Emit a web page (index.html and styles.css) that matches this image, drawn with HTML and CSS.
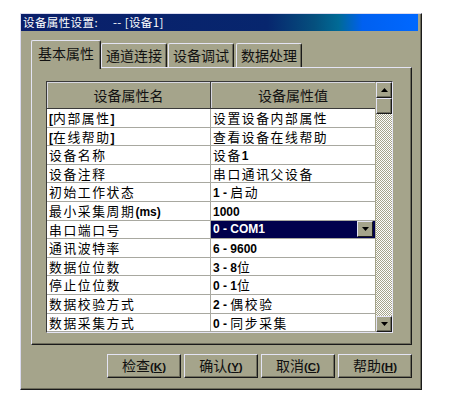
FILE: index.html
```html
<!DOCTYPE html>
<html>
<head>
<meta charset="utf-8">
<link rel="stylesheet" href="styles.css">
</head>
<body>
<div class="win">
  <div class="titlebar"><span class="ttext">设备属性设置:     -- [设备1]</span></div>
  <div class="body">
    <div class="tabs">
      <div class="tab sel">基本属性</div>
      <div class="tab t2">通道连接</div>
      <div class="tab t3">设备调试</div>
      <div class="tab t4">数据处理</div>
    </div>
    <div class="panel">
      <div class="grid">
        <div class="table">
          <div class="hd">设备属性名</div>
          <div class="hd hd2">设备属性值</div>

          <div class="c k"><span class="b">[</span>内部属性<span class="b">]</span></div>
          <div class="c v">设置设备内部属性</div>

          <div class="c k"><span class="b">[</span>在线帮助<span class="b">]</span></div>
          <div class="c v">查看设备在线帮助</div>

          <div class="c k">设备名称</div>
          <div class="c v">设备<span class="b">1</span></div>

          <div class="c k">设备注释</div>
          <div class="c v">串口通讯父设备</div>

          <div class="c k">初始工作状态</div>
          <div class="c v"><span class="b">1 - </span>启动</div>

          <div class="c k">最小采集周期<span class="b">(ms)</span></div>
          <div class="c v"><span class="b">1000</span></div>

          <div class="c k">串口端口号</div>
          <div class="c v selv"><span class="b">0 - COM1</span>
            <span class="drop"><svg width="7" height="4" viewBox="0 0 7 4"><path d="M0 0h7L3.5 4z" fill="#000"/></svg></span>
          </div>

          <div class="c k">通讯波特率</div>
          <div class="c v"><span class="b">6 - 9600</span></div>

          <div class="c k">数据位位数</div>
          <div class="c v"><span class="b">3 - 8</span>位</div>

          <div class="c k">停止位位数</div>
          <div class="c v"><span class="b">0 - 1</span>位</div>

          <div class="c k">数据校验方式</div>
          <div class="c v"><span class="b">2 - </span>偶校验</div>

          <div class="c k">数据采集方式</div>
          <div class="c v"><span class="b">0 - </span>同步采集</div>
        </div>
        <div class="sb">
          <div class="sbtn"><svg width="7" height="4" viewBox="0 0 7 4"><path d="M3.5 0L7 4H0z" fill="#000"/></svg></div>
          <div class="thumb"></div>
          <div class="track"></div>
          <div class="sbtn"><svg width="7" height="4" viewBox="0 0 7 4"><path d="M0 0h7L3.5 4z" fill="#000"/></svg></div>
        </div>
      </div>
    </div>
    <div class="buttons">
      <div class="btn">检查<span class="b">(<u>K</u>)</span></div>
      <div class="btn">确认<span class="b">(<u>Y</u>)</span></div>
      <div class="btn">取消<span class="b">(<u>C</u>)</span></div>
      <div class="btn">帮助<span class="b">(<u>H</u>)</span></div>
    </div>
  </div>
</div>
</body>
</html>
```

FILE: styles.css
```css
* { box-sizing: border-box; }
html, body { margin: 0; padding: 0; background: #fff; }
body {
  font-family: "Noto Sans CJK SC", "DejaVu Sans", sans-serif;
  color: #000;
}
.win {
  margin: 13px 0 0 20px;
  width: 402px;
  height: 377px;
  background: #a5a48b;
  border: 1px solid;
  border-color: #dcdcf0 #1a1a1a #1a1a1a #dcdcf0;
  box-shadow: inset -1px -1px 0 #6e6d5c;
}
.titlebar {
  height: 17px;
  margin-right: 3px;
  background: linear-gradient(90deg, #0a1f6a 0%, #07266e 62%, #05507e 74%, #006a96 80%, #0060f0 86%, #0068ff 100%);
  display: flex;
  align-items: center;
  padding-left: 2px;
}
.ttext {
  color: #fff;
  font-size: 11.5px;
  letter-spacing: 0.4px;
  line-height: 17px;
  white-space: pre;
}
.body {
  padding: 9px 10px 0 10px;
}
.tabs {
  display: flex;
  height: 27px;
  align-items: flex-start;
  position: relative;
  z-index: 2;
}
.tab {
  height: 24px;
  margin-top: 3px;
  font-size: 14px;
  line-height: 22px;
  color: #111;
  text-align: center;
  background: #a5a48b;
  border-top: 1px solid #e4e4f4;
  border-left: 1px solid #e4e4f4;
  border-right: 1px solid #1a1a1a;
  border-radius: 2px 2px 0 0;
  box-shadow: inset -1px 0 0 #6e6d5c;
}
.tab.sel {
  width: 70px;
  height: 29px;
  margin-top: 0;
  line-height: 25px;
  margin-bottom: -2px;
}
.t2 { width: 66px; }
.t3 { width: 66px; margin-left: 1px; }
.t4 { width: 66px; margin-left: 2px; }
.panel {
  width: 381px;
  height: 278px;
  border: 1px solid;
  border-color: #e4e4f4 #1a1a1a #1a1a1a #e4e4f4;
  box-shadow: inset -1px -1px 0 #6e6d5c;
  padding: 13px 0 0 14px;
}
.grid {
  width: 347px;
  height: 252px;
  display: flex;
  border: 1px solid;
  border-color: #3a3a3a #e4e4f4 #e4e4f4 #3a3a3a;
}
.table {
  width: 328px;
  display: grid;
  grid-template-columns: 164px 164px;
  grid-template-rows: 27px;
  grid-auto-rows: 18.6px;
  background: #fff;
  overflow: hidden;
}
.hd {
  background: #a5a48b;
  font-size: 14px;
  line-height: 26px;
  text-align: center;
  color: #111;
  border-right: 1px solid #3a3a3a;
  border-bottom: 1px solid #3a3a3a;
  box-shadow: inset 1px 1px 0 #d8d8e0;
}
.hd2 { border-right: none; }
.c {
  font-size: 12.8px;
  letter-spacing: 1.6px;
  line-height: 17.6px;
  white-space: nowrap;
  border-bottom: 1px solid #a8a8a0;
  padding-left: 2px;
  overflow: hidden;
}
.k { border-right: 1px solid #a8a8a0; }
.v { padding-left: 2px; }
.b {
  font-family: "Liberation Sans", Arial, sans-serif;
  font-weight: bold;
  font-size: 12px;
  letter-spacing: 0;
}
.selv {
  background: #00004c;
  color: #fff;
  display: flex;
  align-items: center;
  justify-content: space-between;
  padding-right: 2px;
}
.drop {
  width: 16px;
  height: 16px;
  background: #a5a48b;
  border: 1px solid;
  border-color: #e4e4f4 #1a1a1a #1a1a1a #e4e4f4;
  display: flex;
  align-items: center;
  justify-content: center;
}
.sb {
  width: 17px;
  display: flex;
  flex-direction: column;
  background: repeating-conic-gradient(#ffffff 0 25%, #a5a48b 0 50%) 0 0 / 2px 2px;
  border-left: 1px solid #a5a48b;
}
.sbtn, .thumb {
  height: 16px;
  background: #a5a48b;
  border: 1px solid;
  border-color: #e4e4f4 #1a1a1a #1a1a1a #e4e4f4;
  box-shadow: inset -1px -1px 0 #6e6d5c;
  display: flex;
  align-items: center;
  justify-content: center;
}
.track { flex: 1; }
.buttons {
  display: flex;
  justify-content: flex-end;
  gap: 3px;
  margin-top: 9px;
  width: 381px;
}
.btn {
  width: 74px;
  height: 24px;
  font-size: 14px;
  line-height: 21px;
  text-align: center;
  color: #111;
  border: 1px solid;
  border-color: #e4e4f4 #1a1a1a #1a1a1a #e4e4f4;
  box-shadow: inset -1px -1px 0 #6e6d5c;
}
.btn .b { font-size: 11.5px; }
```
